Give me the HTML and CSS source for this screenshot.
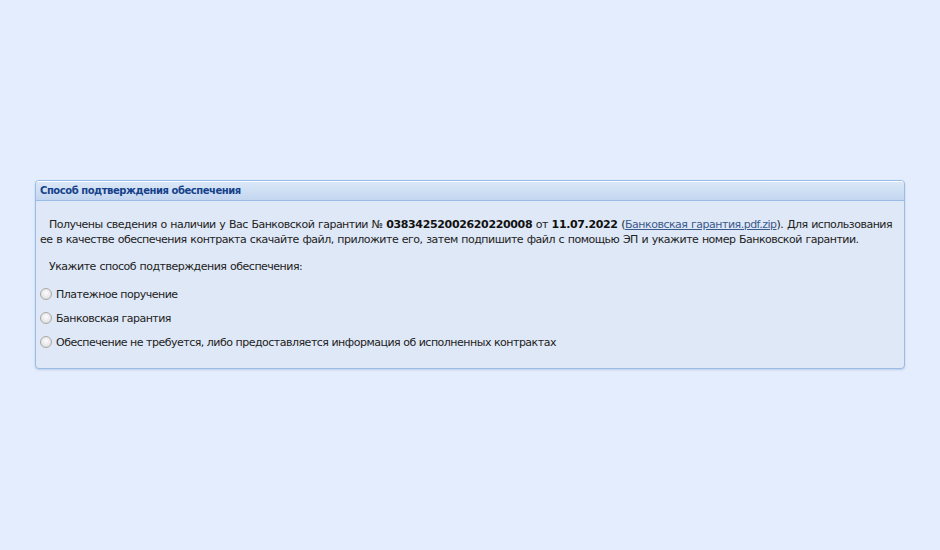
FILE: index.html
```html
<!DOCTYPE html>
<html lang="ru">
<head>
    <meta charset="UTF-8">
    <title>Способ подтверждения обеспечения</title>
    <link rel="stylesheet" href="styles.css">
</head>
<body>
    <div class="panel">
        <div class="panel-header">Способ подтверждения обеспечения</div>
        <div class="panel-body">
            <p class="info">Получены сведения о наличии у Вас Банковской гарантии № <b>03834252002620220008</b> от <b>11.07.2022</b> (<a href="#">Банковская гарантия.pdf.zip</a>). Для использования ее в качестве обеспечения контракта скачайте файл, приложите его, затем подпишите файл с помощью ЭП и укажите номер Банковской гарантии.</p>
            <p class="info last">Укажите способ подтверждения обеспечения:</p>

            <label class="option"><span class="radio"></span>Платежное поручение</label>
            <label class="option"><span class="radio"></span>Банковская гарантия</label>
            <label class="option"><span class="radio"></span>Обеспечение не требуется, либо предоставляется информация об исполненных контрактах</label>
        </div>
    </div>
</body>
</html>
```

FILE: styles.css
```css
* {
    margin: 0;
    padding: 0;
    box-sizing: border-box;
}

body {
    background-color: #e3edfd;
    font-family: 'DejaVu Sans', 'Liberation Sans', sans-serif;
    font-size: 11px;
    letter-spacing: -0.5px;
    color: #222;
    height: 550px;
    padding: 180px 35px 0 35px;
}

/* Panel */
.panel {
    width: 870px;
    border: 1px solid #99bbe8;
    border-radius: 4px;
    background-color: #dfe8f6;
    box-shadow: 0 1px 2px rgba(80, 110, 160, 0.25);
    overflow: hidden;
}

.panel-header {
    height: 20px;
    line-height: 17px;
    padding-left: 4px;
    font-weight: bold;
    font-size: 10px;
    letter-spacing: -0.45px;
    color: #15428b;
    background: linear-gradient(#dae7f6, #cddef3 60%, #c3d6f0);
    border-bottom: 1px solid #99bbe8;
    border-top: 1px solid #ffffff;
}

.panel-body {
    padding: 16px 4px 14px 4px;
}

.info {
    text-indent: 9px;
    line-height: 15px;
    word-spacing: 0.6px;
    margin-bottom: 12px;
}

.info.last {
    margin-bottom: 8px;
}

.info b {
    font-weight: bold;
    letter-spacing: -0.35px;
    color: #111;
}

.info a {
    color: #3a5a8c;
}

.option {
    display: flex;
    align-items: center;
    height: 24px;
}

.radio {
    width: 12px;
    height: 12px;
    border-radius: 50%;
    border: 1px solid #a8a8a8;
    background: radial-gradient(circle at 50% 40%, #fdfdfd, #d6d6d6);
    margin-right: 4px;
}
```
